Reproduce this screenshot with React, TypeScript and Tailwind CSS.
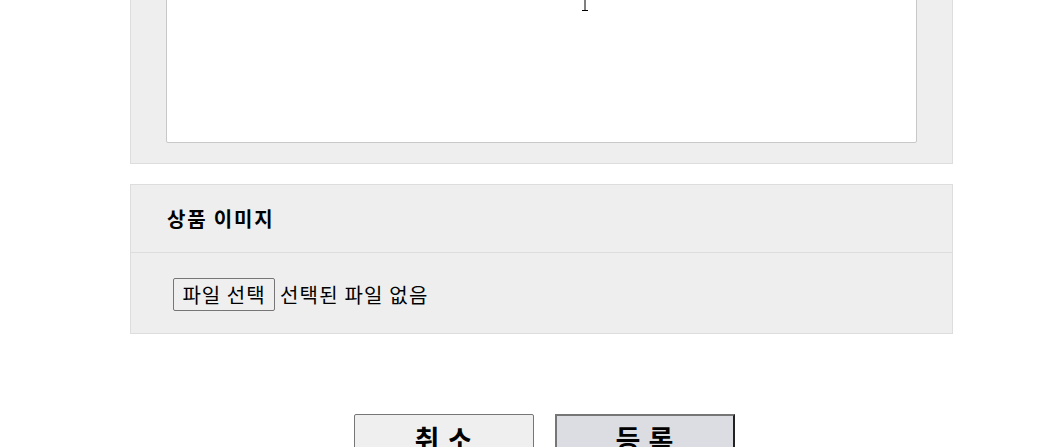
import React from "react";

export default function App() {
  const font = { fontFamily: '"Noto Sans CJK KR", "Noto Sans", sans-serif' };
  return (
    <div className="relative w-[1055px] h-[447px] overflow-hidden bg-white text-black" style={font}>
      <div className="ml-[130px] w-[823px] -mt-[198px] flex flex-col">
        <div className="border border-[#dddddd] bg-[#eeeeee] px-[35px] pt-[20px] pb-[20px]">
          <div className="h-[320px] w-full rounded-[2px] border border-[#c8c8c8] bg-white" />
        </div>

        <div className="mt-[20px] border border-[#dddddd] bg-[#eeeeee]">
          <div className="h-[68px] flex items-center pl-[36px] border-b border-[#dddddd] text-[20px] tracking-[1.8px] font-bold">
            상품 이미지
          </div>
          <div className="h-[80px] flex items-start pt-[25px] pl-[42px] text-[20px] tracking-[1.2px]">
            <button className="h-[33px] w-[102px] rounded-[2px] border border-[#767676] bg-[#efefef] text-[20px] tracking-[1px] leading-none flex items-center justify-center">
              파일 선택
            </button>
            <span className="ml-[5px] h-[33px] flex items-center">선택된 파일 없음</span>
          </div>
        </div>

        <div className="mt-[80px] flex justify-center gap-[21px] pl-[6px]">
          <button className="h-[50px] w-[180px] rounded-[2px] border border-[#767676] bg-[#efefef] text-[27px] tracking-[1px] font-bold flex items-start justify-center pt-[4px]">
            취 소
          </button>
          <button className="h-[50px] w-[180px] border-2 border-t-[#767676] border-l-[#767676] border-r-[#222222] border-b-[#222222] bg-[#dcdde2] text-[27px] tracking-[1px] font-bold flex items-start justify-center pt-[3px]">
            등 록
          </button>
        </div>
      </div>

      <svg className="absolute left-[580px] top-0" width="10" height="12" viewBox="0 0 10 12">
        <path d="M5 0 V10 M2 10.5 H8" stroke="#000" strokeWidth="1" fill="none" />
      </svg>
    </div>
  );
}
